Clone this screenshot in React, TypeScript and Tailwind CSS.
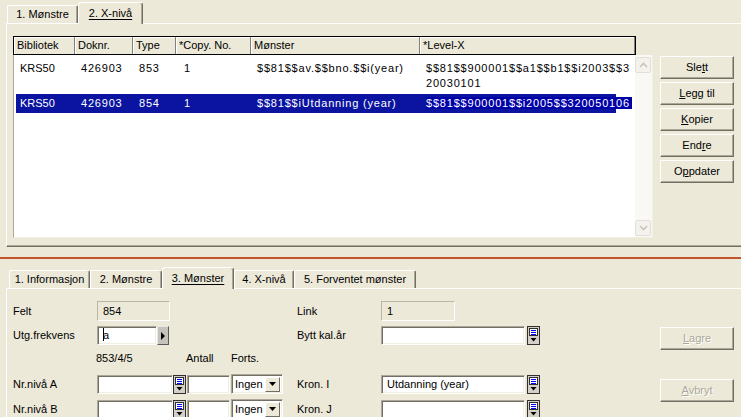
import React from 'react'

const BEIGE = 'bg-[#ece9d8]'

function Tab({ w, active, children }: { w: string; active?: boolean; children: React.ReactNode }) {
  if (active) {
    return (
      <div
        className={`relative z-10 -mb-px h-[22px] ${w} flex items-center justify-center ${BEIGE} border-t border-l border-white border-r border-r-[#716f64] rounded-t-[3px] shadow-[inset_-1px_0_0_#aca899]`}
      >
        <span className="underline underline-offset-[2px]">{children}</span>
      </div>
    )
  }
  return (
    <div
      className={`h-[18px] ${w} flex items-center justify-center border-t border-l border-white border-r border-r-[#716f64] rounded-t-[2px] shadow-[inset_-1px_0_0_#aca899]`}
    >
      {children}
    </div>
  )
}

function Btn({ children, disabled, className = '' }: { children: React.ReactNode; disabled?: boolean; className?: string }) {
  return (
    <div
      className={`w-[74px] h-[23px] flex items-center justify-center border border-t-white border-l-white border-b-[#716f64] border-r-[#716f64] shadow-[inset_-1px_-1px_0_#aca899] ${
        disabled ? 'text-[#aca899] [text-shadow:1px_1px_0_#fff]' : ''
      } ${className}`}
    >
      {children}
    </div>
  )
}

const U = ({ children }: { children: React.ReactNode }) => (
  <span className="underline underline-offset-[1px]">{children}</span>
)

function ListIcon() {
  return (
    <svg width="13" height="19" viewBox="0 0 13 19" className="shrink-0">
      <rect x="0.5" y="0.5" width="12" height="18" fill="#d4d0c8" stroke="#303030" />
      <rect x="2.5" y="2.5" width="8" height="7" fill="#fff" stroke="#303030" />
      <rect x="4" y="4" width="5" height="1" fill="#0000ff" />
      <rect x="4" y="6" width="5" height="1" fill="#0000ff" />
      <rect x="4" y="8" width="5" height="1" fill="#0000ff" />
      <path d="M3.5 12h6l-3 3.5z" fill="#000" />
    </svg>
  )
}

function ScrollBtn({ up }: { up?: boolean }) {
  return (
    <div className="w-[16px] h-[16px] rounded-[2px] border border-[#e2e0d6] bg-[#f3f2ec] flex items-center justify-center">
      <svg width="9" height="6" viewBox="0 0 9 6">
        <path
          d={up ? 'M1 5 L4.5 1.5 L8 5' : 'M1 1 L4.5 4.5 L8 1'}
          fill="none"
          stroke="#c9c6b8"
          strokeWidth="1.6"
        />
      </svg>
    </div>
  )
}

const sunken =
  'border border-t-[#aca899] border-l-[#aca899] border-b-white border-r-white shadow-[inset_1px_1px_0_#716f64,inset_-1px_-1px_0_#f1efe2]'
const readonly = 'border border-t-[#b9b6a7] border-l-[#b9b6a7] border-b-white border-r-white'

function Field({ w, children }: { w: string; children?: React.ReactNode }) {
  return <div className={`${w} h-[19px] shrink-0 bg-white ${sunken} flex items-center pl-[5px] whitespace-nowrap`}>{children}</div>
}

function Select() {
  return (
    <div className={`w-[52px] h-[20px] bg-white ${sunken} flex items-center justify-between pl-[3px] pr-[2px]`}>
      <span>Ingen</span>
      <div className="w-[15px] h-[15px] bg-[#ece9d8] border border-t-white border-l-white border-b-[#716f64] border-r-[#716f64] flex items-center justify-center">
        <svg width="7" height="4" viewBox="0 0 7 4">
          <path d="M0 0h7L3.5 4z" fill="#000" />
        </svg>
      </div>
    </div>
  )
}

export default function App() {
  return (
    <div className={`w-[741px] h-[417px] overflow-hidden ${BEIGE} font-['Liberation_Sans',Arial,sans-serif] text-[11px] leading-[13px] text-black flex flex-col`}>
      {/* upper tabs */}
      <div className="h-[23px] pl-[7px] flex items-end shrink-0">
        <Tab w="w-[71px]">1. Mønstre</Tab>
        <Tab w="w-[65px]" active>
          2. X-nivå
        </Tab>
      </div>

      <div className="ml-[6px] h-[224px] shrink-0 border-t border-l border-white border-b border-b-[#716f64] shadow-[inset_0_-1px_0_#aca899] pt-[12px] pl-[6px] flex">
        {/* list */}
        <div className="w-[640px] h-[202px] flex flex-col shrink-0">
          <div className="w-[623px] h-[19px] border border-black flex shrink-0">
            {[
              ['w-[61px]', 'Bibliotek'],
              ['w-[58px]', 'Doknr.'],
              ['w-[43px]', 'Type'],
              ['w-[75px]', '*Copy. No.'],
              ['w-[169px]', 'Mønster'],
              ['flex-1', '*Level-X'],
            ].map(([w, t]) => (
              <div key={t} className={`${w} shrink-0 pl-[3px] flex items-center border-r border-r-[#808080] shadow-[inset_1px_1px_0_#fff]`}>
                {t}
              </div>
            ))}
          </div>
          <div className="flex-1 flex border-l border-l-[#aca899] border-b border-b-[#f1efe2] border-r border-r-[#f1efe2]">
            <div className="flex-1 bg-white">
              <div className="flex pt-[6px] pb-[3px] leading-[15px]">
                <div className="w-[61px] shrink-0 pl-[6px]">KRS50</div>
                <div className="w-[58px] shrink-0 pl-[6px] tracking-[0.8px]">426903</div>
                <div className="w-[43px] shrink-0 pl-[6px] tracking-[0.8px]">853</div>
                <div className="w-[75px] shrink-0 pl-[8px]">1</div>
                <div className="w-[169px] shrink-0 pl-[6px] tracking-[0.8px] whitespace-nowrap">$$81$$av.$$bno.$$i(year)</div>
                <div className="min-w-0 flex-1 pl-[6px] tracking-[0.8px] whitespace-nowrap">
                  $$81$$900001$$a1$$b1$$i2003$$3
                  <br />
                  20030101
                </div>
              </div>
              <div className="ml-[2px] w-[600px] flex py-[2px] leading-[15px] text-white bg-[#0a14a0]">
                <div className="w-[59px] shrink-0 pl-[4px]">KRS50</div>
                <div className="w-[58px] shrink-0 pl-[6px] tracking-[0.8px]">426903</div>
                <div className="w-[43px] shrink-0 pl-[6px] tracking-[0.8px]">854</div>
                <div className="w-[75px] shrink-0 pl-[8px]">1</div>
                <div className="w-[169px] shrink-0 pl-[6px] tracking-[0.8px] whitespace-nowrap">$$81$$iUtdanning (year)</div>
                <div className="min-w-0 flex-1 pl-[6px] tracking-[0.8px] whitespace-nowrap">
                  <span className="bg-[#0000a8] pr-[2px]">$$81$$900001$$i2005$$320050106</span>
                </div>
              </div>
            </div>
            <div className="w-[17px] shrink-0 flex flex-col bg-[#f9f8f4] pt-[2px] pb-px">
              <ScrollBtn up />
              <div className="flex-1" />
              <ScrollBtn />
            </div>
          </div>
        </div>

        {/* side buttons */}
        <div className="ml-[7px] pt-[20px] flex flex-col gap-[3px]">
          <Btn>
            Sle<U>t</U>t
          </Btn>
          <Btn>
            <U>L</U>egg til
          </Btn>
          <Btn>
            <U>K</U>opier
          </Btn>
          <Btn>
            End<U>r</U>e
          </Btn>
          <Btn>
            O<U>p</U>pdater
          </Btn>
        </div>
      </div>

      <div className="mt-[10px] h-[2px] bg-[#c1552b] shrink-0" />

      {/* lower tabs */}
      <div className="h-[29px] pl-[9px] flex items-end shrink-0">
        <Tab w="w-[81px]">1. Informasjon</Tab>
        <Tab w="w-[72px]">2. Mønstre</Tab>
        <Tab w="w-[72px]" active>
          3. Mønster
        </Tab>
        <Tab w="w-[60px]">4. X-nivå</Tab>
        <Tab w="w-[122px]">5. Forventet mønster</Tab>
      </div>

      <div className="ml-[6px] flex-1 border-t border-l border-white pt-[12px] pl-[6px] flex">
        <div className="flex flex-col">
          <div className="flex h-[20px] items-center">
            <div className="w-[84px]">Felt</div>
            <div className="w-[200px]">
              <div className={`w-[73px] h-[20px] ${readonly} flex items-center pl-[5px]`}>854</div>
            </div>
            <div className="w-[84px]">Link</div>
            <div className={`w-[74px] h-[20px] ${readonly} flex items-center pl-[5px]`}>1</div>
          </div>

          <div className="mt-[5px] flex h-[19px] items-center">
            <div className="w-[84px]">Utg.frekvens</div>
            <div className="w-[200px] flex">
              <Field w="w-[60px]">
                <span className="relative">
                  <span className="absolute left-0 -top-[1px] h-[13px] w-px bg-black" />a
                </span>
              </Field>
              <div className="w-[12px] h-[19px] bg-[#c4c2bb] border border-[#5a5a5a] border-t-[#e8e8e8] border-l-[#e8e8e8] flex items-center justify-center">
                <svg width="4" height="8" viewBox="0 0 4 8">
                  <path d="M0 0L4 4L0 8z" fill="#000" />
                </svg>
              </div>
            </div>
            <div className="w-[84px]">Bytt kal.år</div>
            <div className="flex gap-[2px]">
              <Field w="w-[144px]" />
              <ListIcon />
            </div>
          </div>

          <div className="mt-[5px] flex h-[16px] items-center">
            <div className="w-[83px]" />
            <div className="w-[90px]">853/4/5</div>
            <div className="w-[45px]">Antall</div>
            <div>Forts.</div>
          </div>

          {[
            ['Nr.nivå A', 'Kron. I', 'Utdanning (year)', 'mt-[8px]'],
            ['Nr.nivå B', 'Kron. J', '', 'mt-[5px]'],
          ].map(([a, b, v, mt]) => (
            <div key={a} className={`${mt} flex h-[20px] items-center`}>
              <div className="w-[84px]">{a}</div>
              <div className="w-[200px] flex items-center">
                <Field w="w-[76px]" />
                <ListIcon />
                <div className="ml-px">
                  <Field w="w-[43px]" />
                </div>
                <div className="ml-px">
                  <Select />
                </div>
              </div>
              <div className="w-[84px]">{b}</div>
              <div className="flex gap-[2px]">
                <Field w="w-[144px]">{v}</Field>
                <ListIcon />
              </div>
            </div>
          ))}
        </div>

        <div className="ml-[120px] pt-[26px] flex flex-col">
          <Btn disabled>
            <U>L</U>agre
          </Btn>
          <Btn disabled className="mt-[29px]">
            <U>A</U>vbryt
          </Btn>
        </div>
      </div>
    </div>
  )
}
